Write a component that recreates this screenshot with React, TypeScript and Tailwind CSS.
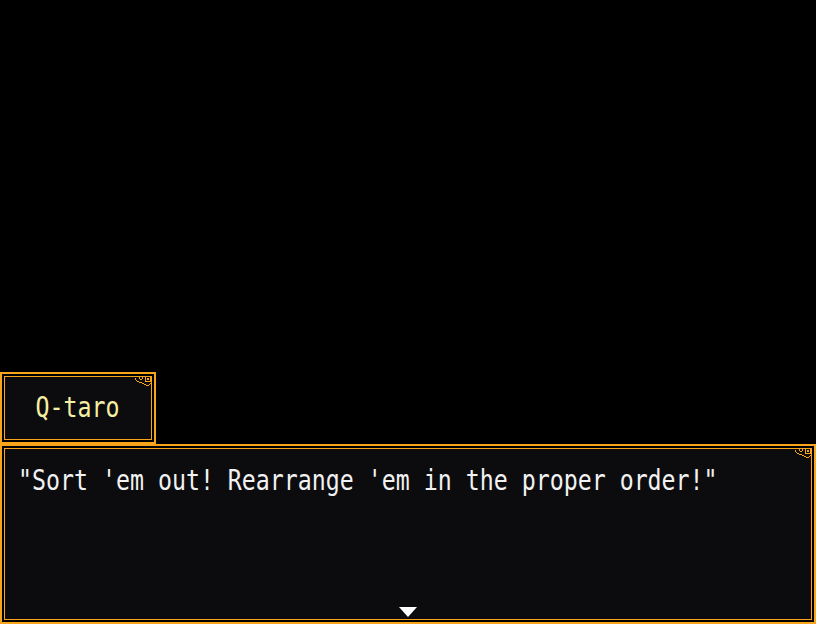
import React from 'react';

const ORANGE = '#f8a51c';

function Ornament() {
  return (
    <svg
      width="18"
      height="14"
      viewBox="0 0 18 14"
      className="absolute right-[1px] top-[1px]"
      shapeRendering="crispEdges"
    >
      {/* little circle */}
      <rect x="5" y="1" width="2" height="1" fill={ORANGE} />
      <rect x="4" y="2" width="1" height="2" fill={ORANGE} />
      <rect x="7" y="2" width="1" height="2" fill={ORANGE} />
      <rect x="5" y="4" width="2" height="1" fill={ORANGE} />
      {/* little square with dot */}
      <rect x="10" y="1" width="6" height="1" fill={ORANGE} />
      <rect x="10" y="6" width="6" height="1" fill={ORANGE} />
      <rect x="10" y="1" width="1" height="6" fill={ORANGE} />
      <rect x="15" y="1" width="1" height="6" fill={ORANGE} />
      <rect x="12" y="3" width="2" height="2" fill={ORANGE} />
      {/* curl */}
      <rect x="0" y="3" width="1" height="2" fill={ORANGE} />
      <rect x="1" y="5" width="1" height="1" fill={ORANGE} />
      <rect x="2" y="6" width="2" height="1" fill={ORANGE} />
      <rect x="4" y="7" width="3" height="1" fill={ORANGE} />
      <rect x="7" y="8" width="2" height="1" fill={ORANGE} />
      <rect x="9" y="9" width="2" height="1" fill={ORANGE} />
      <rect x="11" y="10" width="3" height="1" fill={ORANGE} />
      <rect x="14" y="9" width="1" height="1" fill={ORANGE} />
      <rect x="15" y="8" width="1" height="1" fill={ORANGE} />
    </svg>
  );
}

function Frame({ className, innerClassName, children }: { className: string; innerClassName: string; children: React.ReactNode }) {
  return (
    <div className={`relative border-2 border-[#f8a51c] bg-black p-[2px] ${className}`}>
      <div className={`h-full w-full border border-[#f8a51c] bg-[#0c0c0f] ${innerClassName}`}>{children}</div>
      <Ornament />
    </div>
  );
}

export default function App() {
  return (
    <div
      className="flex h-[624px] w-[816px] flex-col justify-end overflow-hidden bg-black"
      style={{ fontFamily: '"DejaVu Sans Mono", "Liberation Mono", monospace' }}
    >
      <Frame className="h-[72px] w-[156px]" innerClassName="flex items-center justify-center">
        <span className="inline-block scale-x-[0.83] text-[28px] leading-none text-[#f6f0a2]">Q-taro</span>
      </Frame>
      <Frame className="h-[180px] w-[816px]" innerClassName="relative px-[13px] pt-[17px]">
        <p className="origin-left scale-x-[0.83] whitespace-pre text-[28px] leading-[30px] text-[#f2f2f2]">
          "Sort 'em out! Rearrange 'em in the proper order!"
        </p>
        <div className="absolute bottom-[2px] left-1/2 h-0 w-0 -translate-x-[9px] border-x-[9px] border-t-[10px] border-x-transparent border-t-white" />
      </Frame>
    </div>
  );
}
